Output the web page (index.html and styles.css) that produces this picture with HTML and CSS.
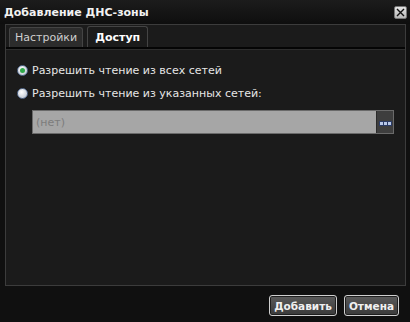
FILE: index.html
```html
<!DOCTYPE html>
<html lang="ru">
<head>
  <meta charset="UTF-8">
  <title>Добавление ДНС-зоны</title>
  <link rel="stylesheet" href="styles.css">
</head>
<body>
  <div class="dialog">
    <div class="titlebar">
      <span class="title">Добавление ДНС-зоны</span>
      <button class="close-btn" title="Закрыть">
        <svg width="9" height="9" viewBox="0 0 9 9"><path d="M1 1L8 8M8 1L1 8" stroke="#111" stroke-width="1.4" fill="none"/></svg>
      </button>
    </div>

    <div class="panel">
      <div class="tabs">
        <div class="tab">Настройки</div>
        <div class="tab active">Доступ</div>
      </div>

      <div class="tab-body">
        <label class="radio-row">
          <span class="radio checked"></span>
          Разрешить чтение из всех сетей
        </label>
        <label class="radio-row">
          <span class="radio"></span>
          Разрешить чтение из указанных сетей:
        </label>
        <div class="picker">
          <div class="picker-value">(нет)</div>
          <div class="picker-btn"><span></span><span></span><span></span></div>
        </div>
      </div>
    </div>

    <div class="footer">
      <button class="btn">Добавить</button>
      <button class="btn">Отмена</button>
    </div>
  </div>
</body>
</html>
```

FILE: styles.css
```css
* {
  box-sizing: border-box;
}

body {
  margin: 0;
  background: #101010;
  font-family: "DejaVu Sans", sans-serif;
  font-size: 11px;
  color: #e8e8e8;
}

.dialog {
  width: 410px;
  height: 322px;
  display: flex;
  flex-direction: column;
}

.titlebar {
  height: 24px;
  display: flex;
  align-items: center;
  justify-content: space-between;
  padding: 0 3px 0 4px;
  background: linear-gradient(#1c1c1c, #0e0e0e);
}

.title {
  font-weight: bold;
  font-size: 11px;
  color: #f2f2f2;
}

.close-btn {
  width: 13px;
  height: 13px;
  padding: 0;
  border: 1px solid #777;
  border-radius: 2px;
  background: linear-gradient(#e4e4e4, #b8b8b8);
  display: flex;
  align-items: center;
  justify-content: center;
}

.panel {
  margin: 0 4px 0 5px;
  height: 262px;
  border: 1px solid #3c3c3c;
  background: #1b1b1b;
  display: flex;
  flex-direction: column;
}

.tabs {
  display: flex;
  gap: 4px;
  padding: 1px 0 0 3px;
  border-bottom: 2px solid #050505;
  height: 24px;
  align-items: flex-end;
}

.tab {
  height: 20px;
  padding: 0 5px;
  display: flex;
  align-items: center;
  border: 1px solid #444;
  border-bottom: none;
  border-radius: 3px 3px 0 0;
  background: #2c2c2c;
  color: #cfcfcf;
}

.tab.active {
  height: 21px;
  padding: 0 7px;
  background: #1b1b1b;
  font-weight: bold;
  color: #fff;
}

.tab-body {
  flex: 1;
  border-top: 1px solid #2e2e2e;
  padding: 9px 0 0 11px;
  display: flex;
  flex-direction: column;
}

.radio-row {
  display: flex;
  align-items: center;
  gap: 4px;
  height: 23px;
  color: #e6e6e6;
}

.radio {
  width: 11px;
  height: 11px;
  border-radius: 50%;
  background: radial-gradient(circle at 40% 35%, #ffffff, #c9cfd8 70%, #8fa0b8);
  border: 1px solid #5a6f92;
  display: flex;
  align-items: center;
  justify-content: center;
}

.radio.checked::after {
  content: "";
  width: 5px;
  height: 5px;
  border-radius: 50%;
  background: #2fa84a;
}

.picker {
  margin: 5px 0 0 15px;
  width: 362px;
  height: 24px;
  display: flex;
  border: 1px solid #6a6a6a;
}

.picker-value {
  flex: 1;
  background: #a6a6a6;
  color: #7c7c7c;
  padding-left: 3px;
  display: flex;
  align-items: center;
}

.picker-btn {
  width: 17px;
  background: #3e3e3e;
  border-left: 1px solid #2a2a2a;
  display: flex;
  align-items: center;
  justify-content: center;
  gap: 1px;
  padding-top: 3px;
}

.picker-btn span {
  width: 3px;
  height: 3px;
  background: #b8c8e8;
  outline: 1px solid #2c3c66;
}

.footer {
  flex: 1;
  display: flex;
  justify-content: flex-end;
  align-items: flex-start;
  gap: 7px;
  padding: 9px 11px 0 0;
}

.btn {
  height: 21px;
  padding: 0 4px;
  font-family: "DejaVu Sans", sans-serif;
  font-size: 10.5px;
  font-weight: bold;
  color: #f0f0f0;
  background: linear-gradient(#5a5a5a, #3a3a3a);
  border: 1px solid #cfcfcf;
  border-radius: 3px;
  box-shadow: inset 0 0 0 1px #1e1e1e;
}
```
